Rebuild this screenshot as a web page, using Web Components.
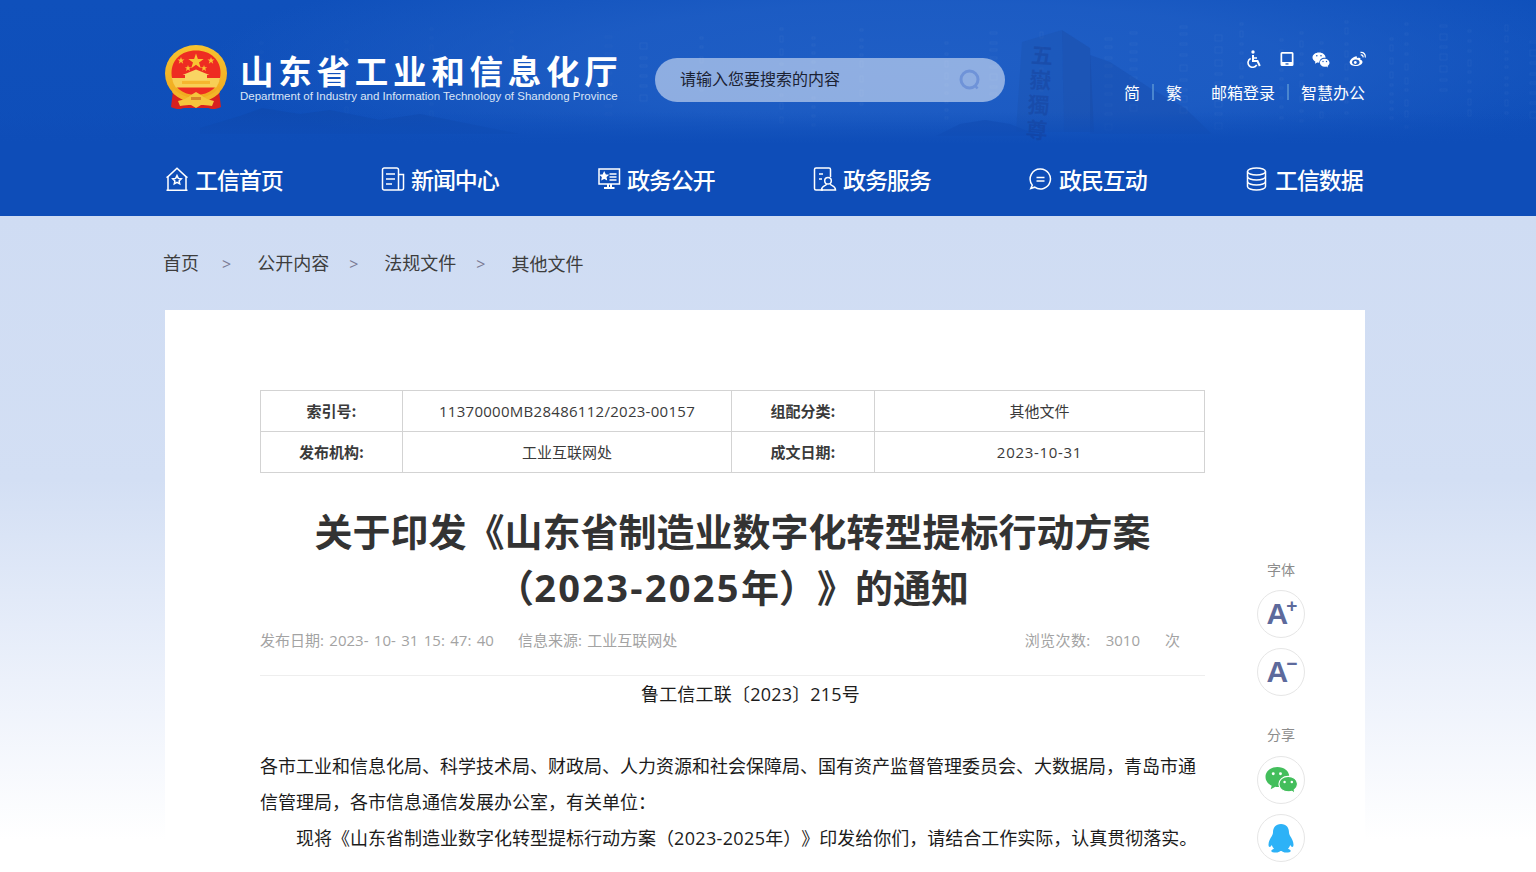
<!DOCTYPE html>
<html lang="zh-CN">
<head>
<meta charset="utf-8">
<title>关于印发《山东省制造业数字化转型提标行动方案（2023-2025年）》的通知</title>
<style>
html,body{margin:0;padding:0;height:872px;overflow:hidden;background:#fff;}
body{font-family:"Open Sans","Noto Sans CJK SC",sans-serif;}
</style>
</head>
<body>
<gov-page>
  <site-header>
    <site-logo></site-logo>
    <search-box></search-box>
    <top-links></top-links>
    <main-nav slot="nav">
      <nav-item icon="home">工信首页</nav-item>
      <nav-item icon="news">新闻中心</nav-item>
      <nav-item icon="screen">政务公开</nav-item>
      <nav-item icon="service">政务服务</nav-item>
      <nav-item icon="chat">政民互动</nav-item>
      <nav-item icon="db">工信数据</nav-item>
    </main-nav>
  </site-header>
  <bread-crumbs>
    <span>首页</span><span>公开内容</span><span>法规文件</span><span>其他文件</span>
  </bread-crumbs>
  <article-card>
    <meta-table></meta-table>
    <article-head></article-head>
    <article-body></article-body>
    <side-rail slot="rail"></side-rail>
  </article-card>
</gov-page>
<script>
const FONT = '"Open Sans","Noto Sans CJK SC",sans-serif';
function def(name, css, html){
  customElements.define(name, class extends HTMLElement{
    constructor(){super();
      const r=this.attachShadow({mode:'open'});
      const h=typeof html==='function'?html(this):html;
      r.innerHTML='<style>'+css+'</style>'+h;
    }
  });
}
const ICONS={
 home:'<path d="M1.500 23.200h21M3 23V9.600L12 1.200l9 8.400V23" /><path d="M1.500 10.600 3 9.600M22.500 10.600 21 9.600"/><path d="M12 8.600l1.300 2.800 3 .4-2.200 2.100.6 3-2.700-1.500-2.700 1.500.6-3-2.200-2.100 3-.4z"/>',
 news:'<path d="M17.500 23H3.200A1.700 1.700 0 0 1 1.500 21.300V2.700A1.700 1.700 0 0 1 3.200 1h12.600a1.700 1.700 0 0 1 1.700 1.700V23h3.300a1.700 1.700 0 0 0 1.700-1.700V7.500h-5"/><path d="M5 7h9M5 12h9M5 17h6"/>',
 screen:'<path d="M2 2h20.500v15H2z"/><path d="M12.500 7h7M12.500 10h7M12.500 13h7" /><path d="M7.200 5.800l1 2.100 2.300.3-1.700 1.600.4 2.300-2-1.100-2 1.100.4-2.300-1.700-1.600 2.300-.3z" fill="#fff"/><path d="M11 17v3M14 17v3M7 21h10.500" stroke-width="2"/>',
 service:'<path d="M10 23H3a1.500 1.500 0 0 1-1.500-1.500V2.500A1.500 1.500 0 0 1 3 1h13a1.500 1.500 0 0 1 1.500 1.500V10"/><path d="M6 7h4M6 12h3"/><circle cx="15" cy="13.800" r="3.300"/><path d="M13.500 17c0 2-5 1.500-5 6h14c0-4.500-5-4-5-6"/>',
 chat:'<path d="M11.500 2a10 10 0 1 1-5.800 18.200L1.800 21.500l1.500-3.400A10 10 0 0 1 11.500 2z"/><path d="M7.500 10.500h8M7.500 14h8"/>',
 db:'<ellipse cx="11.500" cy="4.500" rx="9" ry="3.500"/><path d="M2.500 4.500v15c0 2 4 3.500 9 3.500s9-1.500 9-3.500v-15"/><path d="M2.500 9.500c0 2 4 3.500 9 3.500s9-1.500 9-3.500M2.500 14.500c0 2 4 3.500 9 3.500s9-1.500 9-3.500"/>'
};

def('gov-page',`:host{display:block;width:1536px;height:872px;overflow:hidden;
  background:linear-gradient(#cfdcf3 0,#cfdcf3 216px,#d3dff4 480px,#ecf1fb 680px,#fff 840px);font-family:${FONT};}`,
  '<slot></slot>');

def('site-header',`
:host{display:block;position:relative;height:216px;overflow:hidden;color:#fff;
 background:radial-gradient(ellipse 720px 120px at 930px 62px,#1f5ec5 0,rgba(31,94,197,.8) 50%,rgba(14,77,184,0) 100%),
 linear-gradient(#0f50bb,#0e4db8);}
.bg{position:absolute;left:0;top:0;width:1536px;height:216px;}
.stele{position:absolute;left:1026px;top:44px;writing-mode:vertical-rl;font:700 22px/1.2 "Noto Sans CJK TC",sans-serif;color:rgba(20,55,140,.34);letter-spacing:3px;transform:rotate(4deg);}
.top{position:relative;display:flex;width:1200px;height:140px;margin-left:165px;box-sizing:border-box;padding-top:45px;align-items:flex-start;}
.nav{position:relative;display:block;margin-left:165px;}
`,
()=>{
  let rects='';let seed=7;
  const rnd=()=>{seed=(seed*16807)%2147483647;return seed/2147483647;};
  const cols=[640,700,780,812,860,945,990,1040,1105,1130,1180,1215,1240,1280,1300,1320,1345,1390,1405,1440,1468,1505,1530,260,345,430,510,605];
  cols.forEach(x=>{
    const w=rnd()<.3?7:3;
    let y=20+rnd()*25;const end=95+rnd()*35;
    while(y<end){
      const h=rnd()<.3?6:2;
      rects+=`<rect x="${x}" y="${y.toFixed(0)}" width="${w}" height="${h}" fill="none" stroke="#fff" stroke-opacity="${x<640?.025:.045}"/>`;
      y+=h+5+rnd()*4;
    }
  });
  return `<svg class="bg" viewBox="0 0 1536 216" aria-hidden="true">
   <defs><linearGradient id="fade" x1="0" y1="0" x2="0" y2="1"><stop offset="0" stop-color="#0e4db8" stop-opacity="0"/><stop offset="1" stop-color="#0e4db8"/></linearGradient></defs>
   ${rects}
   <path d="M1022 42 1062 30 1064 132H1016z" fill="#1c4ea9" fill-opacity=".3"/>
   <path d="M1062 30 1090 48 1094 132H1064z" fill="#1a49a0" fill-opacity=".38"/>
   <path d="M1090 55 1110 62 1150 88 1185 108 1212 134H1090z" fill="#1548a4" fill-opacity=".32"/>
   <path d="M936 136 960 124 985 120 1010 124 1040 136z" fill="#1148ac" fill-opacity=".5"/>
   <path d="M200 128 240 116 262 108 300 114 330 110 380 120 420 114 470 124 520 134H200z" fill="#0f47a8" fill-opacity=".45"/>
   <rect x="0" y="112" width="1536" height="32" fill="url(#fade)"/>
   <rect x="0" y="144" width="1536" height="72" fill="#0e4db8"/>
  </svg>
  <div class="stele" aria-hidden="true">五嶽獨尊</div>
  <div class="top"><slot></slot></div>
  <div class="nav"><slot name="nav"></slot></div>`;
});

def('site-logo',`
:host{display:flex;width:453px;flex:none;align-items:flex-start;}
svg{width:62px;height:66px;flex:none;display:block;}
.t{margin-left:13px;margin-top:5px;}
.cn{font:700 33.500px/40px "Noto Sans CJK SC",sans-serif;letter-spacing:4.750px;white-space:nowrap;color:#fff;}
.en{font:11.500px/12px "Liberation Sans",sans-serif;color:#dbe5f6;white-space:nowrap;}
`,`<svg viewBox="0 0 62 66" aria-hidden="true">
 <defs><linearGradient id="g" x1="0" y1="0" x2="0" y2="1"><stop offset="0" stop-color="#f6c330"/><stop offset="1" stop-color="#f0a81e"/></linearGradient></defs>
 <path d="M8 46h46l2 16c-6 3-10 2-13 1H19c-3 1-7 2-13-1z" fill="#d8201f"/>
 <ellipse cx="31" cy="28.500" rx="31" ry="28.500" fill="url(#g)"/>
 <path d="M31 5.500C16 5.500 6.500 15 6.500 28c0 13 11 22 24.500 22s24.500-9 24.500-22C55.500 15 46 5.500 31 5.500z" fill="#ee2c22"/>
 <path d="M6.800 33h48.400a24 24 0 0 1-4 9.500H10.800a24 24 0 0 1-4-9.500z" fill="#f8cf55"/>
 <path d="M20 35v-5.500h22V35zM17.500 30l13.500-5.500L44.500 30z" fill="#f9d463"/>
 <path d="M17 36h28v3H17z" fill="#f6b62e"/>
 <g fill="#f9c433">
  <path d="M31 8.500l1.900 5.600h5.800l-4.700 3.500 1.800 5.600-4.800-3.500-4.800 3.500 1.800-5.600-4.700-3.500h5.800z"/>
  <path d="M16 12l.9 2.500h2.600l-2.100 1.600.8 2.600-2.200-1.600-2.200 1.600.8-2.600-2.100-1.600h2.600zM46 12l.9 2.500h2.600l-2.100 1.600.8 2.600-2.200-1.600-2.200 1.600.8-2.600-2.100-1.600h2.600zM23 20l.8 2.200h2.400l-1.900 1.400.7 2.300-2-1.400-2 1.400.7-2.300-1.900-1.400h2.400zM39 20l.8 2.200h2.400l-1.900 1.400.7 2.300-2-1.400-2 1.400.7-2.300-1.900-1.400h2.400z"/>
 </g>
 <path d="M9 44c6 6 14 9 22 9s16-3 22-9l2 3c-6 7-15 10-24 10S13 54 7 47z" fill="#f3b628"/>
 <path d="M13 56c5-1 10-3 13-6l5-3 5 3c3 3 8 5 13 6l-2 5c-5-1-8-1-11-1l-5 3-5-3c-3 0-6 0-11 1z" fill="#f5c53c"/>
 <path d="M26 52h10v3H26z" fill="#d8852a"/>
</svg>
<div class="t"><div class="cn">山东省工业和信息化厅</div><div class="en">Department of Industry and Information Technology of Shandong Province</div></div>`);

def('search-box',`
:host{display:flex;flex:none;width:350px;height:44px;margin:13px 0 0 37px;border-radius:22px;background:rgba(255,255,255,.5);align-items:center;box-sizing:border-box;padding:0 24px 0 25px;justify-content:space-between;}
span{font:16px/40px "Noto Sans CJK SC",sans-serif;color:#1b2233;height:44px;}
svg{width:22px;height:22px;display:block;}
`,`<span>请输入您要搜索的内容</span><svg viewBox="0 0 22 22" aria-hidden="true"><circle cx="10.500" cy="10.500" r="8.500" fill="none" stroke="#6f93d8" stroke-width="3"/><path d="M16.500 17l2 2.500" stroke="#6f93d8" stroke-width="2.500"/></svg>`);

def('top-links',`
:host{display:flex;flex-direction:column;align-items:flex-end;margin-left:auto;margin-top:5px;color:#fff;}
.ic{display:flex;height:18px;align-items:center;margin-right:-2px;}
.ic svg{display:block;height:18px;flex:none;}
.ln{display:flex;height:24px;margin-top:12px;align-items:center;font:16px/24px "Noto Sans CJK SC",sans-serif;white-space:nowrap;}
i{display:block;width:2px;height:16px;background:#4a86cf;margin:0 12px;}
.b{margin-right:29px;}
`,`<div class="ic">
 <svg style="width:18px" viewBox="0 0 18 18" fill="none" stroke="#fff" aria-hidden="true"><circle cx="8" cy="2" r="1.700" fill="#fff" stroke="none"/><path d="M8 5v6h4.500l2.300 5" stroke-width="2"/><path d="M8 8h4" stroke-width="1.500"/><path d="M5.700 8.500a4.600 4.600 0 1 0 6 6.300" stroke-width="1.600"/></svg>
 <svg style="width:14px;margin-left:17px" viewBox="0 0 14 18" aria-hidden="true"><path fill-rule="evenodd" fill="#fff" d="M2 2h10a1.500 1.500 0 0 1 1.500 1.500v11A1.500 1.500 0 0 1 12 16H2A1.500 1.500 0 0 1 .5 14.500v-11A1.500 1.500 0 0 1 2 2zm.2 1.800V12h9.600V3.800z"/><rect x="5.500" y="13.300" width="3" height="1.300" fill="#1d5cc0"/></svg>
 <svg style="width:18px;margin-left:18px" viewBox="0 0 18 18" aria-hidden="true"><path fill="#fff" d="M7 2.500c3.700 0 6.500 2.300 6.500 5 0 .1 0 .3-.1.400-3.300-.4-6.200 1.800-6 4.700-.6.100-1.700 0-2.200-.1l-2.300 1.200.5-2C1.700 10.700.5 9.200.5 7.500c0-2.700 2.800-5 6.500-5z"/><path fill="#fff" d="M12.700 8.800c2.700 0 4.800 1.800 4.800 3.900 0 1.300-.7 2.300-1.900 3.200l.4 1.500-1.700-.9c-.6.100-1 .2-1.600.2-2.700 0-4.800-1.800-4.800-4s2.100-3.900 4.800-3.900z"/><g fill="#1d5cc0"><circle cx="4.800" cy="5.800" r=".8"/><circle cx="9" cy="5.800" r=".8"/><circle cx="11" cy="11.500" r=".7"/><circle cx="14.500" cy="11.500" r=".7"/></g></svg>
 <svg style="width:18px;margin-left:19px" viewBox="0 0 18 18" fill="none" aria-hidden="true"><path fill="#fff" d="M7.500 6.200c-3.200.7-7 3.400-6.800 6.300C.9 15 3.800 16 6.900 16c3.600 0 6.600-1.700 6.600-4 0-1.500-1.500-2-2.200-2.200.6-1.700-.3-2.400-2-2-.9.200-1.400.5-1.400.5.200-1.100-.2-2.400-.4-2.100z"/><ellipse cx="6.800" cy="12.300" rx="3.700" ry="2.700" fill="#1d5cc0"/><circle cx="6.300" cy="12.500" r="1.400" fill="#fff"/><path d="M11.500 2.500c3-.5 5.500 2 4.700 5M11.800 5c1.400-.3 2.600.9 2.200 2.400" stroke="#fff" stroke-width="1.300"/></svg>
</div>
<div class="ln"><span>简</span><i></i><span class="b">繁</span><span>邮箱登录</span><i></i><span>智慧办公</span></div>`);

def('main-nav',`
:host{display:grid;grid-template-columns:repeat(6,216px);width:1296px;height:76px;align-items:center;box-sizing:border-box;padding-top:2px;}
`,'<slot></slot>');

def('nav-item',`
:host{display:flex;align-items:center;font:500 23px/32px "Noto Sans CJK SC",sans-serif;color:#fff;white-space:nowrap;letter-spacing:-1.100px;}
svg{width:24px;height:24px;display:block;margin-right:6px;fill:none;stroke:#fff;stroke-width:1.500;}
`,el=>`<svg viewBox="0 0 24 24" aria-hidden="true">${ICONS[el.getAttribute('icon')]}</svg><slot></slot>`);

def('bread-crumbs',`
:host{display:flex;width:1204px;height:94px;box-sizing:border-box;margin:0 0 0 163px;align-items:center;font:18px/24px "Noto Sans CJK SC",sans-serif;color:#3d3d3d;}
::slotted(span){display:block;white-space:nowrap;}
::slotted(span:not(:last-child))::after{content:">";display:inline-block;margin:0 26px 0 20px;color:#7b7b95;font-size:16px;font-family:"Open Sans",sans-serif;}
::slotted(span:first-child)::after{margin:0 26px 0 23px;}
`,'<slot></slot>');

def('article-card',`
:host{display:flex;width:1200px;height:562px;margin-left:165px;background:#fff;box-sizing:border-box;padding:80px 0 0 95px;overflow:hidden;align-items:flex-start;}
.main{width:945px;flex:none;display:block;}
.rail{margin-left:52px;flex:none;}
`,`<div class="main"><slot></slot></div><div class="rail"><slot name="rail"></slot></div>`);

def('meta-table',`
:host{display:block;}
table{border-collapse:collapse;width:944px;table-layout:fixed;font:15px/20px "Open Sans","Noto Sans CJK SC",sans-serif;color:#3a3a3a;}
td{border:1px solid #d3d3d3;height:40px;padding:0;text-align:center;box-sizing:border-box;}
th{border:1px solid #d3d3d3;height:40px;padding:0;font:700 15px/20px "Noto Sans CJK SC",sans-serif;color:#3a3a3a;}
.x{letter-spacing:.28px}
.d{letter-spacing:.7px}
`,`<table><colgroup><col style="width:142px"><col style="width:329px"><col style="width:143px"><col style="width:330px"></colgroup>
<tr><th>索引号:</th><td class="x">11370000MB28486112/2023-00157</td><th>组配分类:</th><td>其他文件</td></tr>
<tr><th>发布机构:</th><td>工业互联网处</td><th>成文日期:</th><td class="d">2023-10-31</td></tr></table>`);

def('article-head',`
:host{display:block;margin-top:30px;}
h1{margin:0;font:700 38px/56px "Open Sans","Noto Sans CJK SC",sans-serif;color:#333;text-align:center;text-spacing-trim:space-all;}
h1 div{display:block;}
h1 span{letter-spacing:2.300px;}
.m{display:flex;height:50px;line-height:50px;font-size:15px;color:#a3a3a3;padding-bottom:10px;border-bottom:1px solid #eee;white-space:nowrap;word-spacing:1.500px;}
.s{margin-left:24px;}
.r{margin-left:auto;display:flex;padding-right:25px;}
.r span:first-child{letter-spacing:.4px;}
.r span:nth-child(2){margin:0 25px 0 15px;}
`,`<h1><div>关于印发《山东省制造业数字化转型提标行动方案</div><div>（<span>2023-2025</span>年）》的通知</div></h1>
<div class="m"><span>发布日期: 2023- 10- 31 15: 47: 40</span><span class="s">信息来源: 工业互联网处</span><div class="r"><span>浏览次数:</span><span>3010</span><span>次</span></div></div>`);

def('article-body',`
:host{display:block;font:18px/36px "Open Sans","Noto Sans CJK SC",sans-serif;color:#1c1c1c;text-spacing-trim:space-all;}
p{margin:0;text-indent:2em;}
p span{letter-spacing:.35px;}
.n{text-align:center;margin-bottom:36px;letter-spacing:.2px;}
.f{text-indent:0;}
`,`<p class="n">鲁工信工联〔2023〕215号</p>
<p class="f">各市工业和信息化局、科学技术局、财政局、人力资源和社会保障局、国有资产监督管理委员会、大数据局，青岛市通信管理局，各市信息通信发展办公室，有关单位：</p>
<p>现将《山东省制造业数字化转型提标行动方案（<span>2023-2025</span>年）》印发给你们，请结合工作实际，认真贯彻落实。</p>`);

def('round-btn',`
:host{display:flex;width:48px;height:48px;box-sizing:border-box;border:1px solid #e6e6e6;border-radius:50%;align-items:center;justify-content:center;background:#fff;margin-top:10px;}
`,'<slot></slot>');

def('side-rail',`
:host{display:flex;flex-direction:column;width:48px;padding-top:169px;align-items:center;}
.l{font:14px/20px "Noto Sans CJK SC",sans-serif;color:#8c8c8c;white-space:nowrap;height:21px;}
.a{font:700 30px/30px "Liberation Sans",sans-serif;color:#5d6a9c;display:flex;align-items:flex-start;margin-left:2px;margin-top:-1px;}
.a b{font:700 19px/14px "Liberation Sans",sans-serif;margin-left:-2px;}
svg{display:block;}
`,`<div class="l">字体</div>
<round-btn><span class="a">A<b>+</b></span></round-btn>
<round-btn><span class="a">A<b>−</b></span></round-btn>
<div class="l" style="margin-top:28px;height:22px">分享</div>
<round-btn><svg width="33" height="29" viewBox="0 0 32 28" aria-hidden="true"><path fill="#43be5c" d="M12 1c6.500 0 11.500 4 11.500 9 0 .5 0 .8-.1 1-5.700-.5-10 3-10 7.500 0 .6.100 1.200.2 1.700-1 .2-2.600.1-3.500-.1L5.500 22.500l1-3.500C2.800 17.200.5 14 .5 10.500.5 5 5.500 1 12 1z"/><path fill="#43be5c" stroke="#fff" stroke-width="1" d="M22.500 10c5.200 0 9 3.500 9 7.500 0 2.500-1.300 4.300-3.200 5.700l.7 3-3-1.700c-1.300.3-2.300.5-3.500.5-5.200 0-9-3.400-9-7.500S17.300 10 22.500 10z"/><g fill="#fff"><circle cx="8" cy="7.500" r="1.400"/><circle cx="15" cy="7.500" r="1.400"/><circle cx="19" cy="15.500" r="1.200"/><circle cx="26" cy="15.500" r="1.200"/></g></svg></round-btn>
<round-btn><svg width="28" height="30" viewBox="0 0 28 30" aria-hidden="true"><path fill="#2db2f7" d="M14 1c5.500 0 8 4 8 8.500 0 1.200.3 2 1 3.200 1.700 2.700 3.500 6 3.500 8.800 0 1.800-.6 2.500-1.200 2.500-.7 0-1.400-.9-2.100-2-.4 1.500-1.100 2.700-2.200 3.700 1.500.5 2.700 1.300 2.700 2.300 0 1.100-2 1.500-4.700 1.500-2 0-3.700-.6-4.500-1.500h-1c-.8.900-2.500 1.500-4.500 1.500-2.700 0-4.700-.4-4.700-1.500 0-1 1.200-1.800 2.700-2.300-1.100-1-1.800-2.200-2.200-3.700-.7 1.100-1.400 2-2.100 2-.6 0-1.200-.7-1.200-2.500 0-2.800 1.800-6.100 3.500-8.800.7-1.200 1-2 1-3.200C6 5 8.500 1 14 1z"/></svg></round-btn>`);
</script>
</body>
</html>
